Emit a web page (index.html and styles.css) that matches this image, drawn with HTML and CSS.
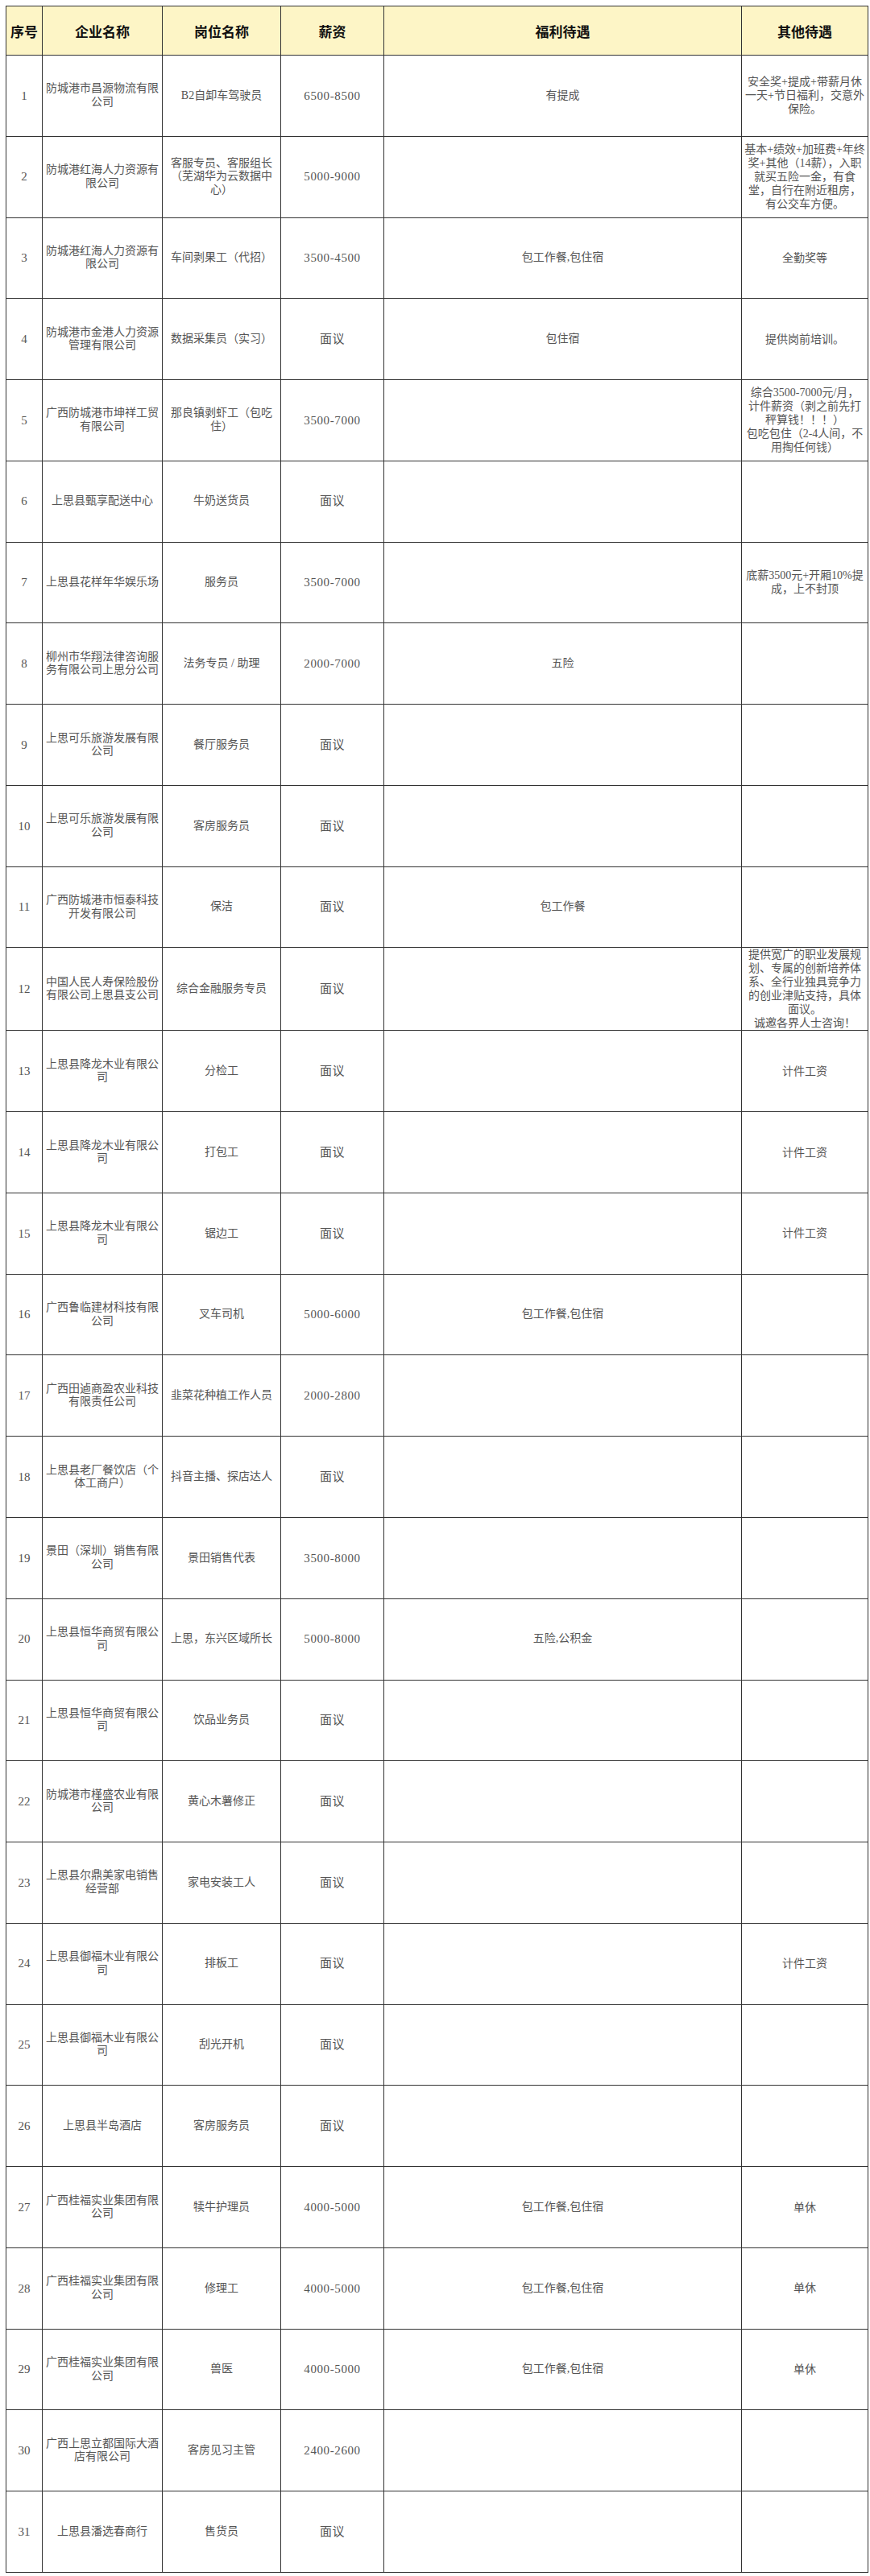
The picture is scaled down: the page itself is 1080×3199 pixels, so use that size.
FILE: index.html
```html
<!DOCTYPE html>
<html lang="zh-CN">
<head>
<meta charset="utf-8">
<title>招聘岗位信息表</title>
<link rel="stylesheet" href="styles.css">
</head>
<body>
<table class="jobs">
  <colgroup>
    <col class="c-no">
    <col class="c-co">
    <col class="c-pos">
    <col class="c-pay">
    <col class="c-wel">
    <col class="c-oth">
  </colgroup>
  <thead>
    <tr>
      <th>序号</th>
      <th>企业名称</th>
      <th>岗位名称</th>
      <th>薪资</th>
      <th>福利待遇</th>
      <th>其他待遇</th>
    </tr>
  </thead>
  <tbody>
    <tr><td class="no">1</td><td class="co">防城港市昌源物流有限公司</td><td class="pos">B2自卸车驾驶员</td><td class="pay">6500-8500</td><td class="wel">有提成</td><td class="oth">安全奖+提成+带薪月休<br>一天+节日福利，交意外<br>保险。</td></tr>
    <tr><td class="no">2</td><td class="co">防城港红海人力资源有限公司</td><td class="pos">客服专员、客服组长（芜湖华为云数据中心）</td><td class="pay">5000-9000</td><td class="wel"></td><td class="oth">基本+绩效+加班费+年终<br>奖+其他（14薪），入职<br>就买五险一金，有食<br>堂，自行在附近租房，<br>有公交车方便。</td></tr>
    <tr><td class="no">3</td><td class="co">防城港红海人力资源有限公司</td><td class="pos">车间剥果工（代招）</td><td class="pay">3500-4500</td><td class="wel">包工作餐,包住宿</td><td class="oth">全勤奖等</td></tr>
    <tr><td class="no">4</td><td class="co">防城港市金港人力资源管理有限公司</td><td class="pos">数据采集员（实习）</td><td class="pay">面议</td><td class="wel">包住宿</td><td class="oth">提供岗前培训。</td></tr>
    <tr><td class="no">5</td><td class="co">广西防城港市坤祥工贸有限公司</td><td class="pos">那良镇剥虾工（包吃住）</td><td class="pay">3500-7000</td><td class="wel"></td><td class="oth">综合3500-7000元/月，<br>计件薪资（剥之前先打<br>秤算钱！！！）<br>包吃包住（2-4人间，不<br>用掏任何钱）</td></tr>
    <tr><td class="no">6</td><td class="co">上思县甄享配送中心</td><td class="pos">牛奶送货员</td><td class="pay">面议</td><td class="wel"></td><td class="oth"></td></tr>
    <tr><td class="no">7</td><td class="co">上思县花样年华娱乐场</td><td class="pos">服务员</td><td class="pay">3500-7000</td><td class="wel"></td><td class="oth">底薪3500元+开厢10%提<br>成，上不封顶</td></tr>
    <tr><td class="no">8</td><td class="co">柳州市华翔法律咨询服务有限公司上思分公司</td><td class="pos">法务专员 / 助理</td><td class="pay">2000-7000</td><td class="wel">五险</td><td class="oth"></td></tr>
    <tr><td class="no">9</td><td class="co">上思可乐旅游发展有限公司</td><td class="pos">餐厅服务员</td><td class="pay">面议</td><td class="wel"></td><td class="oth"></td></tr>
    <tr><td class="no">10</td><td class="co">上思可乐旅游发展有限公司</td><td class="pos">客房服务员</td><td class="pay">面议</td><td class="wel"></td><td class="oth"></td></tr>
    <tr><td class="no">11</td><td class="co">广西防城港市恒泰科技开发有限公司</td><td class="pos">保洁</td><td class="pay">面议</td><td class="wel">包工作餐</td><td class="oth"></td></tr>
    <tr><td class="no">12</td><td class="co">中国人民人寿保险股份有限公司上思县支公司</td><td class="pos">综合金融服务专员</td><td class="pay">面议</td><td class="wel"></td><td class="oth">提供宽广的职业发展规<br>划、专属的创新培养体<br>系、全行业独具竞争力<br>的创业津贴支持，具体<br>面议。<br>诚邀各界人士咨询！</td></tr>
    <tr><td class="no">13</td><td class="co">上思县降龙木业有限公司</td><td class="pos">分检工</td><td class="pay">面议</td><td class="wel"></td><td class="oth">计件工资</td></tr>
    <tr><td class="no">14</td><td class="co">上思县降龙木业有限公司</td><td class="pos">打包工</td><td class="pay">面议</td><td class="wel"></td><td class="oth">计件工资</td></tr>
    <tr><td class="no">15</td><td class="co">上思县降龙木业有限公司</td><td class="pos">锯边工</td><td class="pay">面议</td><td class="wel"></td><td class="oth">计件工资</td></tr>
    <tr><td class="no">16</td><td class="co">广西鲁临建材科技有限公司</td><td class="pos">叉车司机</td><td class="pay">5000-6000</td><td class="wel">包工作餐,包住宿</td><td class="oth"></td></tr>
    <tr><td class="no">17</td><td class="co">广西田逌商盈农业科技有限责任公司</td><td class="pos">韭菜花种植工作人员</td><td class="pay">2000-2800</td><td class="wel"></td><td class="oth"></td></tr>
    <tr><td class="no">18</td><td class="co">上思县老厂餐饮店（个体工商户）</td><td class="pos">抖音主播、探店达人</td><td class="pay">面议</td><td class="wel"></td><td class="oth"></td></tr>
    <tr><td class="no">19</td><td class="co">景田（深圳）销售有限公司</td><td class="pos">景田销售代表</td><td class="pay">3500-8000</td><td class="wel"></td><td class="oth"></td></tr>
    <tr><td class="no">20</td><td class="co">上思县恒华商贸有限公司</td><td class="pos">上思，东兴区域所长</td><td class="pay">5000-8000</td><td class="wel">五险,公积金</td><td class="oth"></td></tr>
    <tr><td class="no">21</td><td class="co">上思县恒华商贸有限公司</td><td class="pos">饮品业务员</td><td class="pay">面议</td><td class="wel"></td><td class="oth"></td></tr>
    <tr><td class="no">22</td><td class="co">防城港市槿盛农业有限公司</td><td class="pos">黄心木薯修正</td><td class="pay">面议</td><td class="wel"></td><td class="oth"></td></tr>
    <tr><td class="no">23</td><td class="co">上思县尔鼎美家电销售经营部</td><td class="pos">家电安装工人</td><td class="pay">面议</td><td class="wel"></td><td class="oth"></td></tr>
    <tr><td class="no">24</td><td class="co">上思县御福木业有限公司</td><td class="pos">排板工</td><td class="pay">面议</td><td class="wel"></td><td class="oth">计件工资</td></tr>
    <tr><td class="no">25</td><td class="co">上思县御福木业有限公司</td><td class="pos">刮光开机</td><td class="pay">面议</td><td class="wel"></td><td class="oth"></td></tr>
    <tr><td class="no">26</td><td class="co">上思县半岛酒店</td><td class="pos">客房服务员</td><td class="pay">面议</td><td class="wel"></td><td class="oth"></td></tr>
    <tr><td class="no">27</td><td class="co">广西桂福实业集团有限公司</td><td class="pos">犊牛护理员</td><td class="pay">4000-5000</td><td class="wel">包工作餐,包住宿</td><td class="oth">单休</td></tr>
    <tr><td class="no">28</td><td class="co">广西桂福实业集团有限公司</td><td class="pos">修理工</td><td class="pay">4000-5000</td><td class="wel">包工作餐,包住宿</td><td class="oth">单休</td></tr>
    <tr><td class="no">29</td><td class="co">广西桂福实业集团有限公司</td><td class="pos">兽医</td><td class="pay">4000-5000</td><td class="wel">包工作餐,包住宿</td><td class="oth">单休</td></tr>
    <tr><td class="no">30</td><td class="co">广西上思立都国际大酒店有限公司</td><td class="pos">客房见习主管</td><td class="pay">2400-2600</td><td class="wel"></td><td class="oth"></td></tr>
    <tr><td class="no">31</td><td class="co">上思县潘选春商行</td><td class="pos">售货员</td><td class="pay">面议</td><td class="wel"></td><td class="oth"></td></tr>
  </tbody>
</table>
</body>
</html>
```
FILE: styles.css
```css
html, body {
  margin: 0;
  padding: 0;
  background: #ffffff;
}

body {
  padding: 7px 3px 0 7px;
  font-family: "Liberation Serif", "Noto Sans CJK SC", serif;
}

.jobs {
  width: 1070px;
  border-collapse: collapse;
  table-layout: fixed;
}

.c-no  { width: 45px; }
.c-co  { width: 149px; }
.c-pos { width: 147px; }
.c-pay { width: 128px; }
.c-wel { width: 444px; }
.c-oth { width: 157px; }

.jobs th,
.jobs td {
  border: 1px solid #333333;
  text-align: center;
  vertical-align: middle;
  padding: 0 3px;
}

.jobs th {
  height: 60px;
  background: #fdf5c6;
  font-family: "Noto Sans CJK SC", "Liberation Sans", sans-serif;
  font-weight: 700;
  font-size: 17px;
  color: #111111;
  padding: 0;
  white-space: nowrap;
}

.jobs td {
  height: 99.77px;
  font-size: 14px;
  line-height: 16.5px;
  font-weight: 400;
  color: #555555;
}

.jobs td.no {
  padding: 0;
  font-size: 15px;
}

.jobs td.co {
  padding: 0 3px;
}

.jobs td.pos {
  padding: 0 5px;
}

.jobs td.pay {
  font-size: 15px;
  letter-spacing: 0.6px;
}

.jobs td.oth {
  padding: 0 2px;
  font-size: 14px;
  line-height: 17px;
}
```
